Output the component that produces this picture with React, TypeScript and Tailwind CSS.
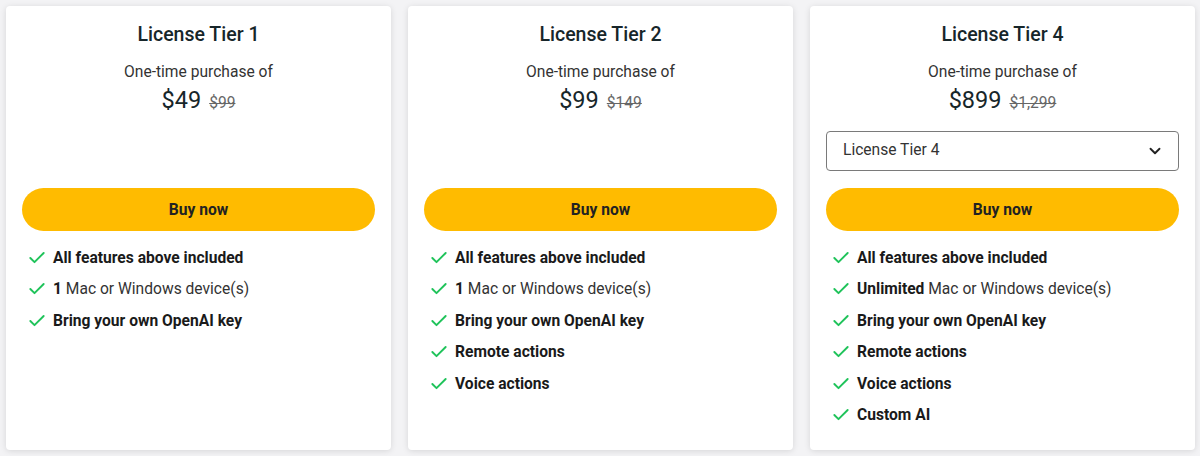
import { Check, ChevronDown } from 'lucide-react';

interface Feature {
  bold: string;
  rest?: string;
}

interface Tier {
  name: string;
  price: string;
  oldPrice: string;
  select?: string;
  features: Feature[];
}

const tiers: Tier[] = [
  {
    name: 'License Tier 1',
    price: '$49',
    oldPrice: '$99',
    features: [
      { bold: 'All features above included' },
      { bold: '1', rest: ' Mac or Windows device(s)' },
      { bold: 'Bring your own OpenAI key' },
    ],
  },
  {
    name: 'License Tier 2',
    price: '$99',
    oldPrice: '$149',
    features: [
      { bold: 'All features above included' },
      { bold: '1', rest: ' Mac or Windows device(s)' },
      { bold: 'Bring your own OpenAI key' },
      { bold: 'Remote actions' },
      { bold: 'Voice actions' },
    ],
  },
  {
    name: 'License Tier 4',
    price: '$899',
    oldPrice: '$1,299',
    select: 'License Tier 4',
    features: [
      { bold: 'All features above included' },
      { bold: 'Unlimited', rest: ' Mac or Windows device(s)' },
      { bold: 'Bring your own OpenAI key' },
      { bold: 'Remote actions' },
      { bold: 'Voice actions' },
      { bold: 'Custom AI' },
    ],
  },
];

function TierCard({ tier }: { tier: Tier }) {
  return (
    <div className="bg-white rounded-[4px] shadow-[0_1px_6px_rgba(0,0,0,0.12)] px-4 pt-[15px] pb-[23px]">
      <h3 className="text-center text-[19.5px] leading-[28px] font-medium text-[#17262a]">{tier.name}</h3>
      <p className="mt-[11px] text-center text-[15.6px] leading-[24px] text-[#333]">One-time purchase of</p>
      <div className="flex items-baseline justify-center gap-2 h-[32px]">
        <span className="text-[23.5px] leading-[32px] text-[#17262a]">{tier.price}</span>
        <span className="text-[15.6px] text-[#666] line-through">{tier.oldPrice}</span>
      </div>

      <div className="mt-[15px] h-[40px]">
        {tier.select && (
          <div className="h-full flex items-center justify-between border border-[#7a7a7a] rounded-[4px] pl-4 pr-[14px] text-[15.6px] text-[#333]">
            <span>{tier.select}</span>
            <ChevronDown className="w-[18px] h-[18px] text-[#222]" strokeWidth={2.5} />
          </div>
        )}
      </div>

      <button className="mt-[17px] w-full h-[43px] pt-[2px] rounded-full bg-[#ffbb00] text-[15.6px] font-bold text-[#222]">
        Buy now
      </button>

      <ul className="mt-[15px] pl-[5px] flex flex-col gap-[7.4px]">
        {tier.features.map((f) => (
          <li key={f.bold + (f.rest ?? '')} className="flex items-center gap-[6px] text-[15.6px] leading-[24px] text-[#1a1a1a]">
            <Check className="w-[20px] h-[20px] shrink-0 text-[#1fc35a]" strokeWidth={2.3} />
            <span>
              <span className="font-bold">{f.bold}</span>
              {f.rest && <span className="text-[#333]">{f.rest}</span>}
            </span>
          </li>
        ))}
      </ul>
    </div>
  );
}

export default function App() {
  return (
    <div className="min-h-[456px] bg-[#f3f3f5] pl-[6px] pr-[5px] pt-[6px] pb-[7px] font-['Roboto',sans-serif]">
      <div className="grid grid-cols-3 gap-[17px]">
        {tiers.map((t) => (
          <TierCard key={t.name} tier={t} />
        ))}
      </div>
    </div>
  );
}
